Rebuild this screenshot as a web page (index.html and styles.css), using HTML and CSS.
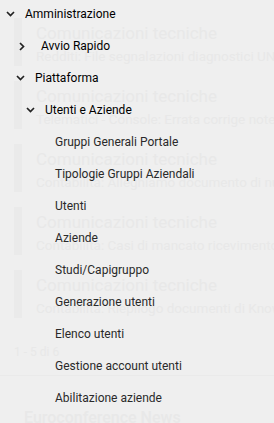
FILE: index.html
```html
<!DOCTYPE html>
<html lang="it">
<head>
  <meta charset="UTF-8" />
  <meta name="viewport" content="width=device-width, initial-scale=1.0"/>
  <title>Menu Amministrazione</title>
  <link rel="stylesheet" href="styles.css">
</head>
<body>

  <!-- pagina sotto il menu, sbiadita -->
  <main class="page">
    <div class="news-card">
      <div class="news-bar"></div>
      <div class="news-body">
        <div class="news-title">Comunicazioni tecniche</div>
        <div class="news-text">Redditi: File segnalazioni diagnostici UNICO</div>
      </div>
    </div>
    <div class="news-card">
      <div class="news-bar"></div>
      <div class="news-body">
        <div class="news-title">Comunicazioni tecniche</div>
        <div class="news-text">Telematici - Console: Errata corrige note</div>
      </div>
    </div>
    <div class="news-card">
      <div class="news-bar"></div>
      <div class="news-body">
        <div class="news-title">Comunicazioni tecniche</div>
        <div class="news-text">Contabilità: Alleghiamo documento di nuovo</div>
      </div>
    </div>
    <div class="news-card">
      <div class="news-bar"></div>
      <div class="news-body">
        <div class="news-title">Comunicazioni tecniche</div>
        <div class="news-text">Contabilità: Casi di mancato ricevimento</div>
      </div>
    </div>
    <div class="news-card">
      <div class="news-bar"></div>
      <div class="news-body">
        <div class="news-title">Comunicazioni tecniche</div>
        <div class="news-text">Contabilità: Riepilogo documenti di Know</div>
      </div>
    </div>

    <div class="pager">1 - 5 di 6</div>
    <div class="section-title">Euroconference News</div>
  </main>

  <nav class="menu">
    <div class="menu-row group">
      <span class="chev"><svg width="9" height="6" viewBox="0 0 9 6"><path d="M1 1l3.5 3.5L8 1" fill="none" stroke="#222" stroke-width="1.7"/></svg></span>
      Amministrazione
    </div>
    <div class="menu-row group lvl1 closed">
      <span class="chev"><svg width="6" height="9" viewBox="0 0 6 9"><path d="M1 1l3.5 3.5L1 8" fill="none" stroke="#222" stroke-width="1.7"/></svg></span>
      Avvio Rapido
    </div>
    <div class="menu-row group lvl1">
      <span class="chev"><svg width="9" height="6" viewBox="0 0 9 6"><path d="M1 1l3.5 3.5L8 1" fill="none" stroke="#222" stroke-width="1.7"/></svg></span>
      Piattaforma
    </div>
    <div class="menu-row group lvl2">
      <span class="chev"><svg width="9" height="6" viewBox="0 0 9 6"><path d="M1 1l3.5 3.5L8 1" fill="none" stroke="#222" stroke-width="1.7"/></svg></span>
      Utenti e Aziende
    </div>
    <div class="menu-row leaf">Gruppi Generali Portale</div>
    <div class="menu-row leaf">Tipologie Gruppi Aziendali</div>
    <div class="menu-row leaf">Utenti</div>
    <div class="menu-row leaf">Aziende</div>
    <div class="menu-row leaf">Studi/Capigruppo</div>
    <div class="menu-row leaf">Generazione utenti</div>
    <div class="menu-row leaf">Elenco utenti</div>
    <div class="menu-row leaf">Gestione account utenti</div>
    <div class="menu-row leaf">Abilitazione aziende</div>
  </nav>

</body>
</html>
```

FILE: styles.css
```css
body {
  margin: 0;
  background: #efefef;
  font-family: Roboto, 'Liberation Sans', sans-serif;
  position: relative;
  height: 423px;
  overflow: hidden;
}

.page {
  padding: 18px 0 0 14px;
  color: #e8e8e8;
}

.news-card {
  display: flex;
  height: 48px;
  margin-bottom: 15px;
}

.news-bar {
  width: 8px;
  background: #eaeaea;
  flex-shrink: 0;
}

.news-body {
  padding-left: 14px;
  white-space: nowrap;
  overflow: hidden;
}

.news-title {
  font-size: 17px;
  line-height: 20px;
  margin-top: 5px;
}

.news-text {
  font-size: 13.5px;
  line-height: 20px;
  margin-top: 3px;
}

.pager {
  font-size: 12px;
  margin-top: 26px;
  line-height: 16px;
}

.section-title {
  margin: 15px 0 0 -14px;
  padding: 30px 0 0 24px;
  border-top: 1px solid #eaeaea;
  font-size: 16px;
  font-weight: 500;
  line-height: 24px;
}

.menu {
  position: absolute;
  top: -2px;
  left: 0;
  width: 274px;
}

.menu-row {
  display: flex;
  align-items: center;
  height: 32px;
  font-size: 12px;
  color: #222;
  white-space: nowrap;
}

.chev {
  width: 10px;
  display: flex;
  justify-content: center;
  align-items: center;
  margin-right: 10px;
}

.group {
  padding-left: 5px;
  color: #000;
}

.lvl1 {
  padding-left: 15px;
}

.lvl1.closed {
  padding-left: 17px;
}

.lvl1.closed .chev {
  margin-right: 14px;
}

.lvl2 {
  padding-left: 25px;
}

.leaf {
  padding-left: 55px;
  color: #2a2a2a;
}
```
